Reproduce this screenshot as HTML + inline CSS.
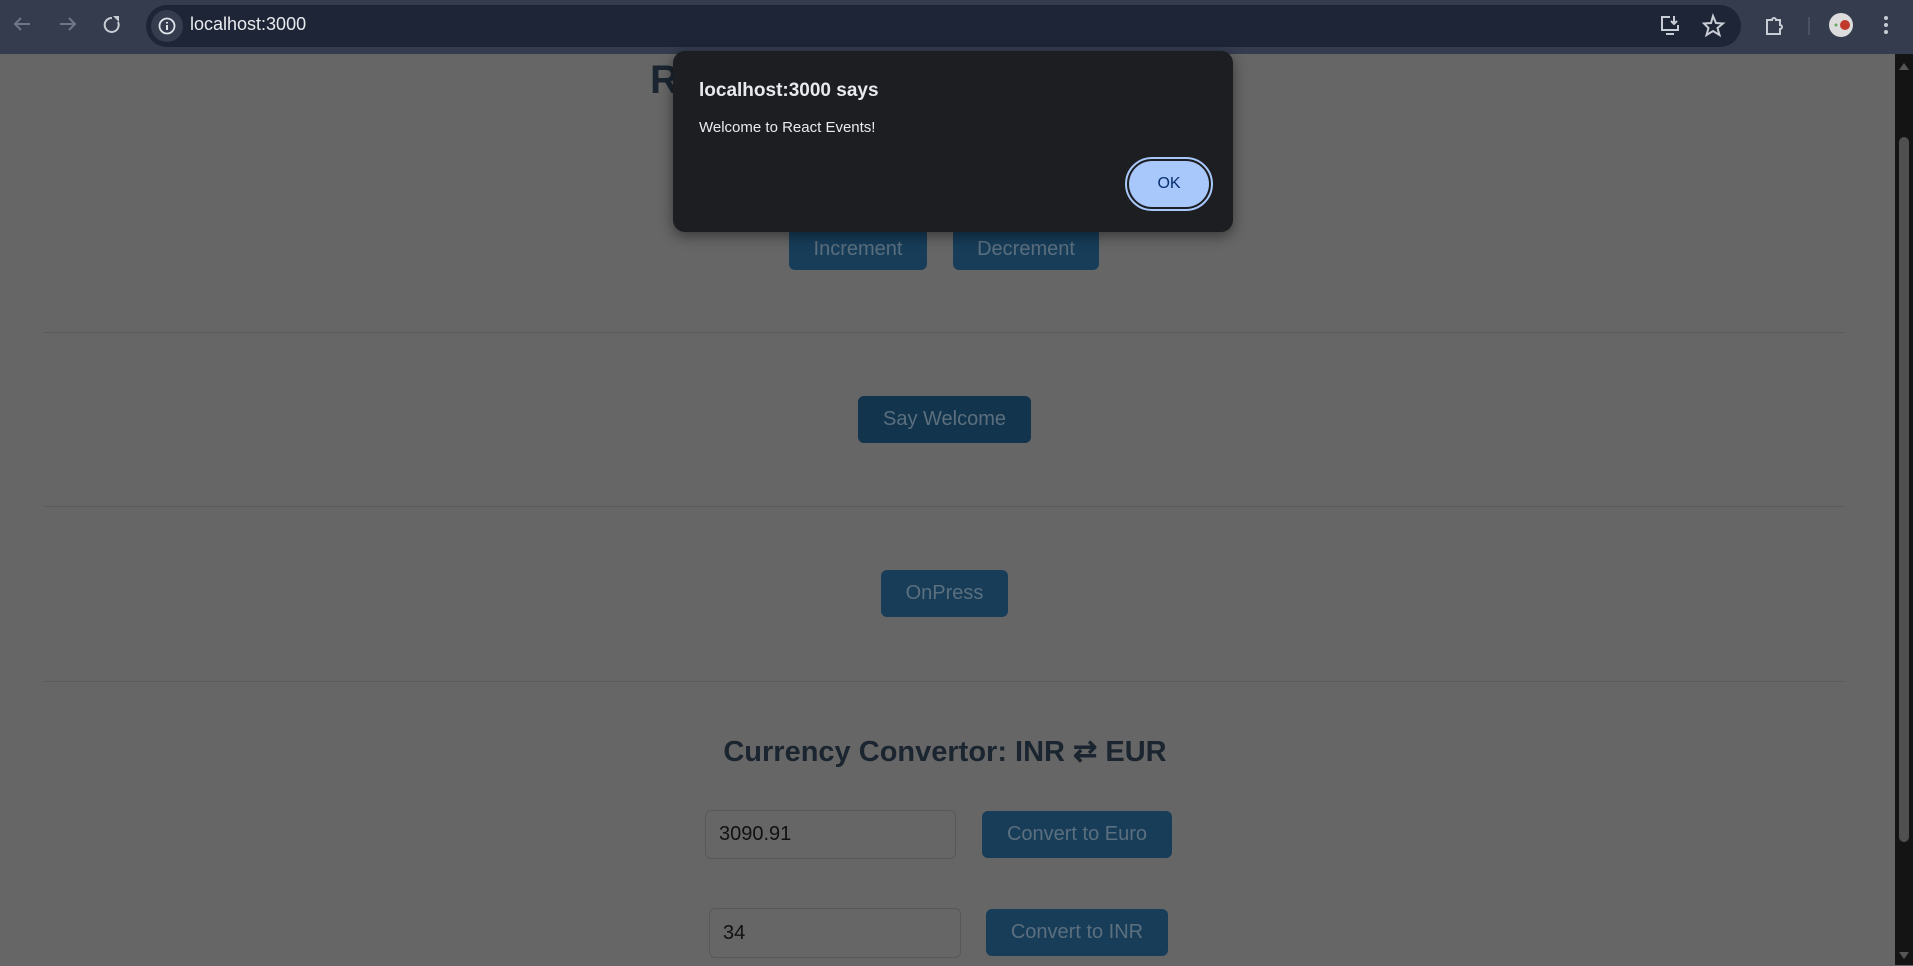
<!DOCTYPE html>
<html><head><meta charset="utf-8"><style>
*{box-sizing:border-box;margin:0;padding:0}
body{width:1913px;height:965px;overflow:hidden;background:#666;font-family:"Liberation Sans",Arial,sans-serif;position:relative}
.bar{position:absolute;left:0;top:0;width:1913px;height:54px;background:#343c4e}
.url{position:absolute;left:146px;top:5px;width:1595px;height:42px;border-radius:21px;background:#1e2536}
.ib{position:absolute;left:151px;top:10px;width:32px;height:32px;border-radius:16px;background:#343c4e}
.a{position:absolute}
.btn{position:absolute;background:#173d59;color:#5b6f7e;font-size:20px;border-radius:6px;display:flex;align-items:center;justify-content:center}
.hr{position:absolute;left:44px;width:1801px;height:1px;background:#5a5a5a}
.inp{position:absolute;border:1px solid #585858;border-radius:6px;font-size:20px;color:#111;padding-left:13px;display:flex;align-items:center}
.sb{position:absolute;left:1895px;top:54px;width:18px;height:911px;background:#141414}
</style></head><body>
<div class="bar"></div>
<svg class="a" style="left:10px;top:12px" width="140" height="26" viewBox="0 0 140 26">
<g fill="none" stroke="#6f7685" stroke-width="2"><path d="M20 12H6M11 6l-6 6 6 6"/><path d="M50 12h14M59 6l6 6-6 6"/></g>
<path d="M102 6a7 7 0 1 0 6 4" fill="none" stroke="#c8ccd4" stroke-width="2"/><path d="M103 4h6v6z" fill="#c8ccd4"/>
</svg>
<div class="url"></div><div class="ib"></div>
<svg class="a" style="left:157px;top:16px" width="20" height="20" viewBox="0 0 20 20"><circle cx="10" cy="10" r="7.5" fill="none" stroke="#e0e3ea" stroke-width="1.8"/><path d="M10 9v5M10 6v1.5" stroke="#e0e3ea" stroke-width="2"/></svg>
<div class="a" style="left:190px;top:14px;font-size:18px;color:#e8eaee">localhost:3000</div>
<svg class="a" style="left:1658px;top:12px" width="250" height="30" viewBox="0 0 250 30">
<g fill="none" stroke="#c8ccd4" stroke-width="2"><path d="M12 5H4v13h16v-5M8 22h8M16 4v8M13 9l3 3 3-3"/><path d="M55 4l3 7 7 .5-5.5 4.5 2 7-6.5-4-6.5 4 2-7L46 11.5l7-.5z"/><path d="M109 8h5a2 2 0 0 1 4 0h4v5a2 2 0 0 1 0 4v5h-13z"/><path d="M151 5v18" stroke="#4a5262"/></g>
<circle cx="183" cy="13" r="12" fill="#dcdcdc"/><circle cx="187" cy="13" r="5" fill="#c0392b"/><circle cx="178" cy="13" r="1.5" fill="#6a6"/>
<g fill="#c8ccd4"><circle cx="228" cy="6" r="2"/><circle cx="228" cy="13" r="2"/><circle cx="228" cy="20" r="2"/></g>
</svg>

<div class="a" style="left:650px;top:58px;width:592px;font-size:40px;font-weight:bold;color:#1a2530;white-space:nowrap;letter-spacing:1px">React Events Examples</div>
<div class="btn" style="left:789px;top:228px;width:138px;height:42px">Increment</div>
<div class="btn" style="left:953px;top:228px;width:146px;height:42px">Decrement</div>
<div class="hr" style="top:332px"></div>
<div class="btn" style="left:858px;top:396px;width:173px;height:47px;background:#12344d">Say Welcome</div>
<div class="hr" style="top:506px"></div>
<div class="btn" style="left:881px;top:570px;width:127px;height:47px">OnPress</div>
<div class="hr" style="top:681px"></div>
<div class="a" style="left:690px;top:734px;width:510px;text-align:center;font-size:29px;font-weight:bold;color:#1a2530">Currency Convertor: INR ⇄ EUR</div>
<div class="inp" style="left:705px;top:810px;width:251px;height:49px">3090.91</div>
<div class="btn" style="left:982px;top:811px;width:190px;height:47px">Convert to Euro</div>
<div class="inp" style="left:709px;top:908px;width:252px;height:50px">34</div>
<div class="btn" style="left:986px;top:909px;width:182px;height:47px">Convert to INR</div>
<div class="sb"></div>
<svg class="a" style="left:1895px;top:56px" width="18" height="910" viewBox="0 0 18 910"><path d="M4 14L9 7l5 7z" fill="#555"/><rect x="4" y="81" width="10" height="705" rx="5" fill="#505050"/><path d="M4 896l5 7 5-7z" fill="#555"/></svg>

<div class="a" style="left:673px;top:51px;width:560px;height:181px;background:#1c1e22;border-radius:12px;box-shadow:0 4px 14px rgba(0,0,0,.45)"></div>
<div class="a" style="left:699px;top:80px;font-size:19px;font-weight:bold;color:#e8eaed">localhost:3000 says</div>
<div class="a" style="left:699px;top:119px;font-size:15px;color:#e8eaed">Welcome to React Events!</div>
<div class="a" style="left:1125px;top:157px;width:88px;height:54px;border-radius:27px;border:2px solid #a8c7fa;background:#1c1e22;padding:2px"><div style="width:100%;height:100%;border-radius:24px;background:#a8c7fa;color:#062e6f;font-size:16px;display:flex;align-items:center;justify-content:center">OK</div></div>
</body></html>
